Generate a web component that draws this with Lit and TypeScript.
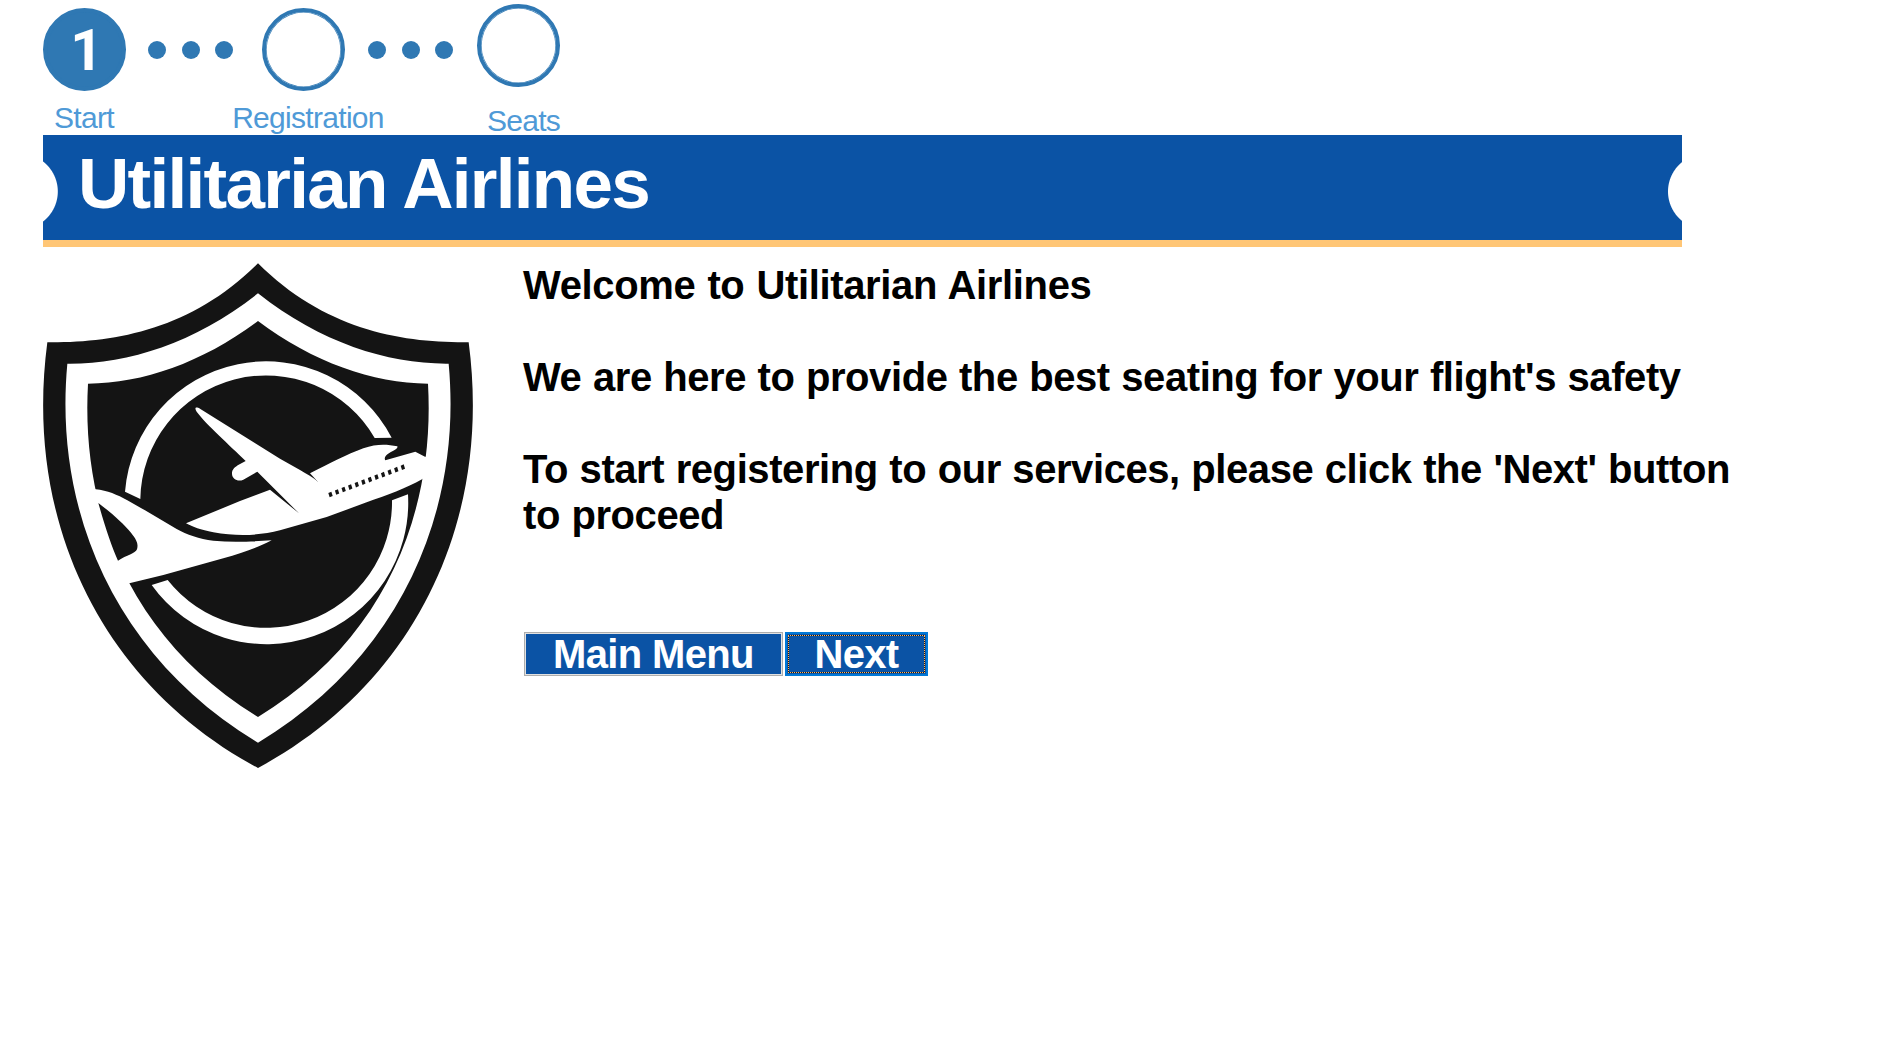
import { LitElement, html, css, svg } from "lit";
import { customElement, property } from "lit/decorators.js";

type Point = [number, number];
type Cubic = [Point, Point, Point, Point];

const AXIS = 684;

const mirror = ([x, y]: Point): Point => [2 * AXIS - x, y];
const curve = (a: Point, b: Point, c: Point) => `C${[a, b, c].map((p) => p.join(" ")).join(" ")}`;

/* A shield outline from its left half: crown to shoulder, shoulder to tip. */
function shield(crown: Cubic, flank: Cubic): string {
  const back = ([a, b, c]: Cubic) => curve(mirror(c), mirror(b), mirror(a));
  return (
    `M${crown[0].join(" ")}` +
    curve(crown[1], crown[2], crown[3]) +
    curve(flank[1], flank[2], flank[3]) +
    back(flank) +
    back(crown) +
    "Z"
  );
}

const OUTER = shield(
  [[684, 40], [484, 240], [252, 279], [52, 277]],
  [[52, 277], [-20, 820], [220, 1305], [684, 1554]],
);
const BAND = shield(
  [[684, 130], [494, 280], [290, 343], [112, 341]],
  [[112, 341], [70, 790], [262, 1225], [684, 1478]],
);
const FIELD = shield(
  [[684, 213], [520, 336], [340, 400], [174, 401]],
  [[174, 401], [152, 794], [306, 1170], [684, 1401]],
);

const WINDOWS = Array.from({ length: 12 }, (_, i) => [
  452 + i * 19.73,
  313 - i * 7.45,
]);

@customElement("airline-crest")
export class AirlineCrest extends LitElement {
  static styles = css`
    :host { display: block; }
    .crest { display: block; width: 430px; height: 508px; }
    .ink { fill: #141414; }
    .paper { fill: #fff; }
  `;

  render() {
    return html`
      <svg class="crest" viewBox="39 36 1290 1524" role="img" aria-label="Utilitarian Airlines crest">
        <path class="ink" d=${OUTER} />
        <path class="paper" d=${BAND} />
        <path class="ink" d=${FIELD} />
        <path class="paper" d="M285 725A424.500 424.500 0 0 1 1085 563L1034 564A377 377 0 0 0 331 747Z" />
        <path class="paper" d="M1086 751A377 377 0 0 1 413 990L365 1005A424.500 424.500 0 0 0 1134 733Z" />
        <g transform="translate(0 750)">
          <path class="paper" d="M180 -36L197 -32C232 -28 262 -16 292 1L345 31L440 87C470 104 508 117 550 122C610 128 670 124 725 121C690 140 640 158 580 175L400 225L298 250L275 250L165 0Z" />
          <path class="ink" d="M205 9C240 35 280 70 303 98C322 122 325 132 321 148C316 160 290 166 264 182C245 140 225 80 205 9Z" />
        </g>
        <g transform="translate(450 420)">
          <path class="paper" d="M18 400L180 333L270 299L357 370L232 245L190 269C174 276 157 268 156 252C155 238 165 231 176 224L197 213C150 166 80 105 50 65C43 54 46 49 60 56L300 206L360 240C380 252 400 262 415 277L390 250C450 220 500 193 550 175C590 161 620 163 652 169C656 178 628 184 617 198C613 204 614 208 616 211L706 185L735 200L752 200L752 252L726 268C680 294 620 316 560 337L440 381L300 421C240 437 170 439 100 427C62 419 38 411 18 400Z" />
          ${WINDOWS.map(
            ([x, y]) => svg`<path class="ink" d=${`M${x - 7} ${y - 4}l9 -4l4 13l-9 4Z`} />`,
          )}
        </g>
      </svg>
    `;
  }
}

@customElement("step-progress")
export class StepProgress extends LitElement {
  static styles = css`
    :host { display: block; font-family: "Liberation Sans", Arial, sans-serif; }
    .steps { display: flex; align-items: flex-start; height: 127px; }
    .step { display: flex; flex-direction: column; align-items: center; width: 83px; }
    .disc {
      box-sizing: border-box; width: 83px; height: 83px; border-radius: 50%;
      border: 4px solid #2f78b3; background: #fff; box-shadow: inset 0 0 0 0.6px #2f78b3;
      display: flex; align-items: center; justify-content: center;
      color: #fff; font-family: Roboto, "Liberation Sans", sans-serif;
      font-size: 57px; font-weight: 700; line-height: 75px;
    }
    .current { background: #2f78b3; padding: 1px 0 0 4px; }
    .label {
      margin-top: 10px; font-size: 30px; line-height: 34px; color: #4f9ad7;
      white-space: nowrap; letter-spacing: -0.7px;
    }
    .start .label { margin-left: -1px; }
    .registration .label { margin-left: 9px; }
    .seats { margin-top: -4px; }
    .seats .label { margin-left: 10px; margin-top: 17px; }
    .dots { display: flex; margin-top: 33px; gap: 15.5px; }
    .first { margin-left: 22px; margin-right: 29px; }
    .second { margin-left: 23px; margin-right: 24px; }
    .dot { width: 18px; height: 18px; border-radius: 50%; background: #2f78b3; }
  `;

  private dots(name: string) {
    return html`<div class="dots ${name}">
      <span class="dot"></span><span class="dot"></span><span class="dot"></span>
    </div>`;
  }

  render() {
    return html`
      <div class="steps">
        <div class="step start">
          <div class="disc current">1</div>
          <div class="label">Start</div>
        </div>
        ${this.dots("first")}
        <div class="step registration">
          <div class="disc"></div>
          <div class="label">Registration</div>
        </div>
        ${this.dots("second")}
        <div class="step seats">
          <div class="disc"></div>
          <div class="label">Seats</div>
        </div>
      </div>
    `;
  }
}

@customElement("ticket-banner")
export class TicketBanner extends LitElement {
  @property() heading = "";

  static styles = css`
    :host { display: block; font-family: "Liberation Sans", Arial, sans-serif; }
    .banner {
      box-sizing: border-box; width: 1639px; height: 112px;
      border-bottom: 7px solid #ffc676; padding-left: 35px;
      background:
        radial-gradient(circle at -23px 56.5px, #fff 37.3px, transparent 38.3px),
        radial-gradient(circle at 1662.8px 56.5px, #fff 37.3px, transparent 38.3px),
        #0b53a5;
    }
    .title {
      margin: 0; padding-top: 7px; color: #fff;
      font-size: 71px; line-height: 84px; letter-spacing: -1.7px; white-space: nowrap;
    }
  `;

  render() {
    return html`<div class="banner"><h1 class="title">${this.heading}</h1></div>`;
  }
}

@customElement("app-root")
export class AppRoot extends LitElement {
  static styles = css`
    :host {
      display: block; min-height: 1044px; background: #fff; color: #000;
      font-family: "Liberation Sans", Arial, sans-serif;
    }
    .page { padding: 8px 0 0 43px; }
    .content { display: flex; gap: 50px; padding-top: 15px; }
    .copy { width: 1240px; font-size: 40px; font-weight: 700; line-height: 46px; }
    .text { margin: 0 0 46px; letter-spacing: -0.42px; word-spacing: 0.8px; }
    .greeting { letter-spacing: -0.35px; word-spacing: 1.2px; }
    .actions { display: flex; gap: 2px; padding-left: 1px; margin-top: 94px; }
    .button {
      box-sizing: border-box; height: 44px; padding: 0; border-radius: 0;
      background: #0b53a5; color: #fff; font: inherit; line-height: 40px; letter-spacing: -0.65px;
      display: flex; align-items: center; justify-content: center;
    }
    .menu { width: 259px; border: 1px solid #adadad; box-shadow: inset 0 0 0 1px #e1e1e1; }
    .next { width: 143px; border: 2px solid #0078d7; padding: 1px; }
    .focus {
      box-sizing: border-box; width: 100%; height: 38px; line-height: 36px;
      border: 1px dotted #ffb45f; text-align: center;
      background:
        linear-gradient(#0b53a5, #0b53a5) padding-box,
        linear-gradient(#1a1a1a, #1a1a1a) border-box;
    }
  `;

  render() {
    return html`
      <main class="page">
        <step-progress></step-progress>
        <ticket-banner heading="Utilitarian Airlines"></ticket-banner>
        <section class="content">
          <airline-crest></airline-crest>
          <div class="copy">
            <p class="text greeting">Welcome to Utilitarian Airlines</p>
            <p class="text">We are here to provide the best seating for your flight's safety</p>
            <p class="text">To start registering to our services, please click the 'Next' button to proceed</p>
            <div class="actions">
              <button class="button menu">Main Menu</button>
              <button class="button next"><span class="focus">Next</span></button>
            </div>
          </div>
        </section>
      </main>
    `;
  }
}
